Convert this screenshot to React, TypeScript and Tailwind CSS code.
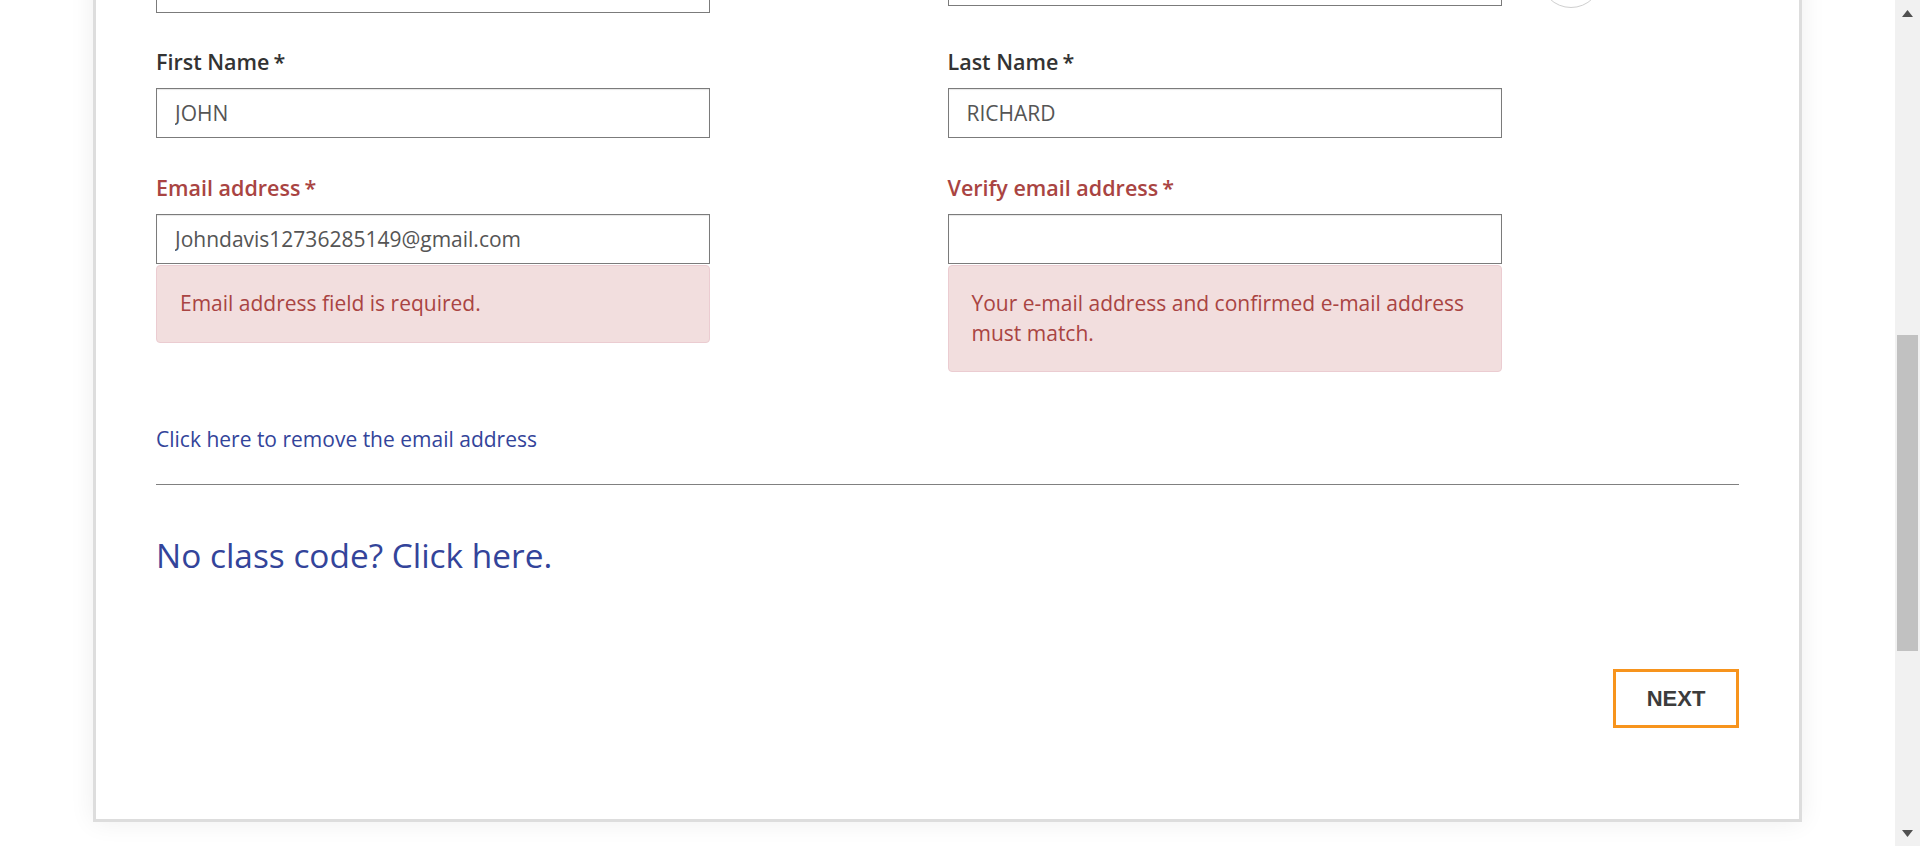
import React from "react";

const labelBase = "text-[21.5px] leading-[29px] font-semibold mb-[12px]";
const inputBase =
  "block w-[554px] h-[50px] border border-[#7b7b7b] bg-white px-[18px] text-[21px] text-[#555555] shadow-[inset_0_1px_1px_rgba(0,0,0,0.1)] outline-none";

function Field({
  label,
  value,
  error,
  invalid,
}: {
  label: string;
  value: string;
  error?: string;
  invalid?: boolean;
}) {
  return (
    <div className="flex flex-col">
      <label className={`${labelBase} ${invalid ? "text-[#a94442]" : "text-[#333333]"}`}>
        {label}
        <span className="ml-[4px]">*</span>
      </label>
      <input className={inputBase} value={value} readOnly />
      {error && (
        <div className="w-[554px] mt-px rounded-[4px] border border-[#ebccd1] bg-[#f2dede] px-[23px] py-[23px] text-[21px] leading-[29.5px] text-[#a94442]">
          {error}
        </div>
      )}
    </div>
  );
}

function Scrollbar() {
  return (
    <div className="flex h-full w-[25px] shrink-0 flex-col bg-[#f1f1f1]">
      <div className="flex h-[26px] items-center justify-center">
        <svg width="11" height="7" viewBox="0 0 11 7">
          <path d="M5.5 0 L11 7 L0 7 Z" fill="#505050" />
        </svg>
      </div>
      <div className="h-[309px]" />
      <div className="mx-[2px] h-[316px] bg-[#c1c1c1]" />
      <div className="flex-1" />
      <div className="flex h-[26px] items-center justify-center">
        <svg width="11" height="7" viewBox="0 0 11 7">
          <path d="M0 0 L11 0 L5.5 7 Z" fill="#505050" />
        </svg>
      </div>
    </div>
  );
}

export default function App() {
  return (
    <div className="flex h-[846px] w-full overflow-hidden bg-white font-['Open_Sans','Noto_Sans',sans-serif]">
      <div className="flex-1 overflow-hidden">
        {/* card, scrolled so its top is above the viewport */}
        <div className="mx-auto -mt-[40px] w-[1709px] border-[3px] border-[#dddddd] bg-white px-[60px] pb-[91px] shadow-[0_0_24px_rgba(0,0,0,0.07)]">
          {/* row partly scrolled out */}
          <div className="grid h-[50px] grid-cols-2">
            <div className="h-[50px] w-[554px] border border-[#7b7b7b] bg-white" />
            <div className="flex h-[50px] items-end">
              <div className="mb-[7px] h-[43px] w-[554px] border border-[#7b7b7b] bg-white" />
              <div className="mb-[5px] ml-[38px] h-[62px] w-[62px] shrink-0 rounded-full border border-[#cfcfcf]" />
            </div>
          </div>

          <div className="mt-[34px] grid grid-cols-2">
            <Field label="First Name" value="JOHN" />
            <Field label="Last Name" value="RICHARD" />
          </div>

          <div className="mt-[35px] grid grid-cols-2 items-start">
            <Field
              label="Email address"
              value="Johndavis12736285149@gmail.com"
              error="Email address field is required."
              invalid
            />
            <Field
              label="Verify email address"
              value=""
              error="Your e-mail address and confirmed e-mail address must match."
              invalid
            />
          </div>

          <a className="mt-[53px] block w-fit text-[21px] leading-[29px] text-[#33449a]" href="#">
            Click here to remove the email address
          </a>

          <div className="mt-[30px] h-px bg-[#808080]" />

          <a className="mt-[47px] block w-fit text-[33.4px] leading-[47px] text-[#33449a]" href="#">
            No class code? Click here.
          </a>

          <div className="mt-[90px] flex justify-end">
            <button className="flex h-[59px] w-[126px] items-center justify-center border-[3px] border-[#f7941d] bg-white font-['Liberation_Sans',Arial,sans-serif] text-[22px] font-bold text-[#3c3c3c]">
              NEXT
            </button>
          </div>
        </div>
      </div>
      <Scrollbar />
    </div>
  );
}
